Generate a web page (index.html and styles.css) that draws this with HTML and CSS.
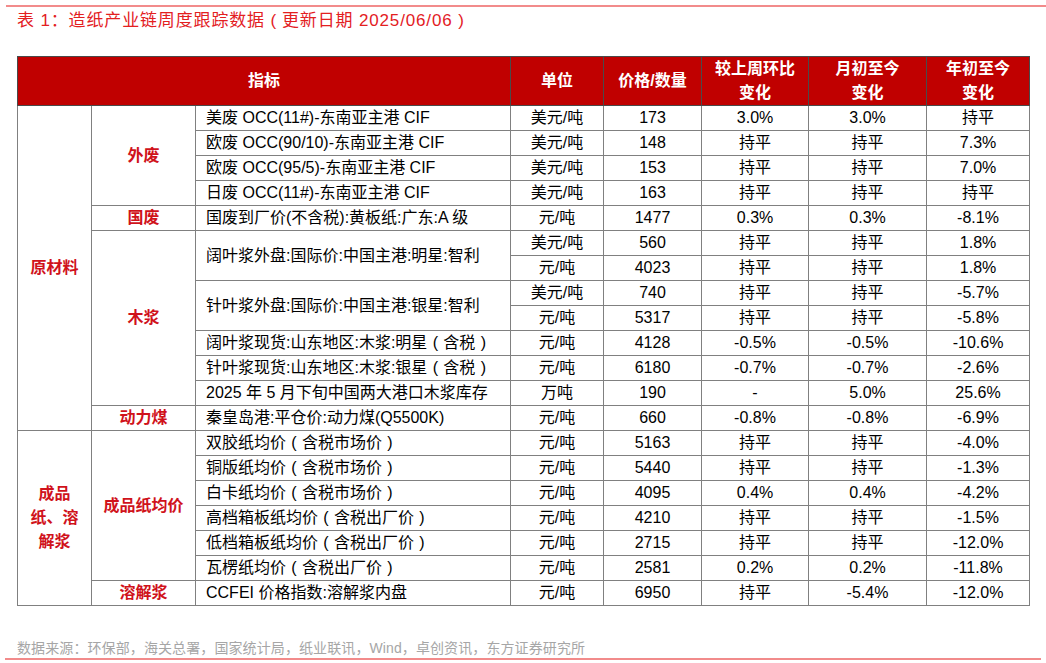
FILE: index.html
```html
<!DOCTYPE html>
<html lang="zh">
<head>
<meta charset="utf-8">
<link rel="stylesheet" href="styles.css">
</head>
<body>
<div class="page">
  <div class="rule top-rule"></div>
  <h1 class="title">表 1：造纸产业链周度跟踪数据<span class="br">(</span>更新日期 2025/06/06<span class="br">)</span></h1>
  <table class="data">
    <colgroup>
      <col class="c1"><col class="c2"><col class="c3"><col class="c4"><col class="c5"><col class="c6"><col class="c7"><col class="c8">
    </colgroup>
    <thead>
      <tr>
        <th colspan="3">指标</th>
        <th>单位</th>
        <th>价格/数量</th>
        <th>较上周环比<br>变化</th>
        <th>月初至今<br>变化</th>
        <th>年初至今<br>变化</th>
      </tr>
    </thead>
    <tbody>
      <tr>
        <td rowspan="13" class="grp">原材料</td>
        <td rowspan="4" class="grp">外废</td>
        <td class="name">美废 OCC(11#)-东南亚主港 CIF</td>
        <td>美元/吨</td><td>173</td><td>3.0%</td><td>3.0%</td><td>持平</td>
      </tr>
      <tr>
        <td class="name">欧废 OCC(90/10)-东南亚主港 CIF</td>
        <td>美元/吨</td><td>148</td><td>持平</td><td>持平</td><td>7.3%</td>
      </tr>
      <tr>
        <td class="name">欧废 OCC(95/5)-东南亚主港 CIF</td>
        <td>美元/吨</td><td>153</td><td>持平</td><td>持平</td><td>7.0%</td>
      </tr>
      <tr>
        <td class="name">日废 OCC(11#)-东南亚主港 CIF</td>
        <td>美元/吨</td><td>163</td><td>持平</td><td>持平</td><td>持平</td>
      </tr>
      <tr>
        <td class="grp">国废</td>
        <td class="name">国废到厂价(不含税):黄板纸:广东:A 级</td>
        <td>元/吨</td><td>1477</td><td>0.3%</td><td>0.3%</td><td>-8.1%</td>
      </tr>
      <tr>
        <td rowspan="7" class="grp">木浆</td>
        <td rowspan="2" class="name">阔叶浆外盘:国际价:中国主港:明星:智利</td>
        <td>美元/吨</td><td>560</td><td>持平</td><td>持平</td><td>1.8%</td>
      </tr>
      <tr>
        <td>元/吨</td><td>4023</td><td>持平</td><td>持平</td><td>1.8%</td>
      </tr>
      <tr>
        <td rowspan="2" class="name">针叶浆外盘:国际价:中国主港:银星:智利</td>
        <td>美元/吨</td><td>740</td><td>持平</td><td>持平</td><td>-5.7%</td>
      </tr>
      <tr>
        <td>元/吨</td><td>5317</td><td>持平</td><td>持平</td><td>-5.8%</td>
      </tr>
      <tr>
        <td class="name">阔叶浆现货:山东地区:木浆:明星<span class="br">(</span>含税<span class="br">)</span></td>
        <td>元/吨</td><td>4128</td><td>-0.5%</td><td>-0.5%</td><td>-10.6%</td>
      </tr>
      <tr>
        <td class="name">针叶浆现货:山东地区:木浆:银星<span class="br">(</span>含税<span class="br">)</span></td>
        <td>元/吨</td><td>6180</td><td>-0.7%</td><td>-0.7%</td><td>-2.6%</td>
      </tr>
      <tr>
        <td class="name">2025 年 5 月下旬中国两大港口木浆库存</td>
        <td>万吨</td><td>190</td><td>-</td><td>5.0%</td><td>25.6%</td>
      </tr>
      <tr>
        <td class="grp">动力煤</td>
        <td class="name">秦皇岛港:平仓价:动力煤(Q5500K)</td>
        <td>元/吨</td><td>660</td><td>-0.8%</td><td>-0.8%</td><td>-6.9%</td>
      </tr>
      <tr class="section">
        <td rowspan="7" class="grp">成品纸、溶解浆</td>
        <td rowspan="6" class="grp">成品纸均价</td>
        <td class="name">双胶纸均价<span class="br">(</span>含税市场价<span class="br">)</span></td>
        <td>元/吨</td><td>5163</td><td>持平</td><td>持平</td><td>-4.0%</td>
      </tr>
      <tr>
        <td class="name">铜版纸均价<span class="br">(</span>含税市场价<span class="br">)</span></td>
        <td>元/吨</td><td>5440</td><td>持平</td><td>持平</td><td>-1.3%</td>
      </tr>
      <tr>
        <td class="name">白卡纸均价<span class="br">(</span>含税市场价<span class="br">)</span></td>
        <td>元/吨</td><td>4095</td><td>0.4%</td><td>0.4%</td><td>-4.2%</td>
      </tr>
      <tr>
        <td class="name">高档箱板纸均价<span class="br">(</span>含税出厂价<span class="br">)</span></td>
        <td>元/吨</td><td>4210</td><td>持平</td><td>持平</td><td>-1.5%</td>
      </tr>
      <tr>
        <td class="name">低档箱板纸均价<span class="br">(</span>含税出厂价<span class="br">)</span></td>
        <td>元/吨</td><td>2715</td><td>持平</td><td>持平</td><td>-12.0%</td>
      </tr>
      <tr>
        <td class="name">瓦楞纸均价<span class="br">(</span>含税出厂价<span class="br">)</span></td>
        <td>元/吨</td><td>2581</td><td>0.2%</td><td>0.2%</td><td>-11.8%</td>
      </tr>
      <tr>
        <td class="grp">溶解浆</td>
        <td class="name">CCFEI 价格指数:溶解浆内盘</td>
        <td>元/吨</td><td>6950</td><td>持平</td><td>-5.4%</td><td>-12.0%</td>
      </tr>
    </tbody>
  </table>
  <p class="source">数据来源：环保部，海关总署，国家统计局，纸业联讯，Wind，卓创资讯，东方证券研究所</p>
  <div class="rule bottom-rule"></div>
</div>
</body>
</html>
```

FILE: styles.css
```css
html, body {
  margin: 0;
  padding: 0;
  background: #ffffff;
}

body {
  font-family: "Liberation Sans", Arial, "Noto Sans CJK SC", sans-serif;
  color: #000;
}

.page {
  width: 1046px;
  height: 663px;
  padding-top: 5px;
  box-sizing: border-box;
}

.rule {
  height: 2px;
  background: #f28b8b;
}

.top-rule {
  margin-left: 6px;
}

.title {
  margin: 3px 0 0 17px;
  font-size: 17px;
  line-height: 22px;
  font-weight: normal;
  color: #e3201f;
  letter-spacing: 0.85px;
}

.br {
  display: inline-block;
  width: 1em;
  text-align: center;
  letter-spacing: 0;
}

.data {
  margin: 24px 0 0 17px;
  border-collapse: collapse;
  table-layout: fixed;
  width: 1012px;
  font-size: 16px;
  border: 1px solid #4a4a4a;
}

.c1 { width: 74px; }
.c2 { width: 104px; }
.c3 { width: 315px; }
.c4 { width: 93px; }
.c5 { width: 98px; }
.c6 { width: 107px; }
.c7 { width: 118px; }
.c8 { width: 103px; }

.data th {
  background: #c00000;
  color: #fff;
  font-weight: bold;
  line-height: 24px;
  height: 48px;
  padding: 0;
  border: 1px solid #4a4a4a;
  text-align: center;
  vertical-align: middle;
}

.data td {
  height: 24px;
  line-height: 24px;
  padding: 0;
  border: 1px solid #808080;
  text-align: center;
  vertical-align: middle;
  white-space: nowrap;
}

.data td.name {
  text-align: left;
  padding-left: 10px;
}

.data td.grp {
  color: #d0121b;
  font-weight: bold;
  white-space: normal;
  padding: 0 10px;
}

.data tr.section td {
  border-top-color: #4a4a4a;
}

.source {
  margin: 32px 0 0 17px;
  font-size: 14px;
  line-height: 20px;
  color: #a6a6a6;
  letter-spacing: 0.1px;
}

.bottom-rule {
  margin: 0 5px 0 5px;
}
```
